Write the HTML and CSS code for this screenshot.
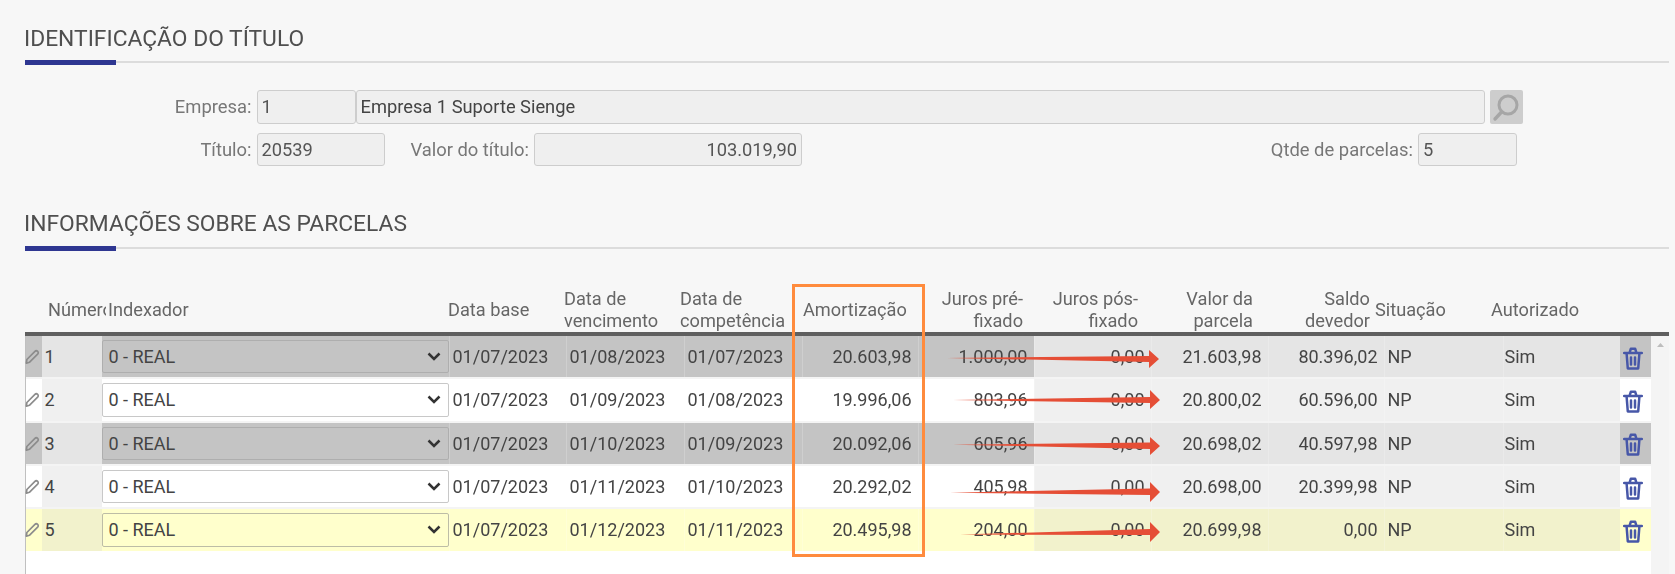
FILE: index.html
```html
<!DOCTYPE html>
<html lang="pt-BR">
<head>
<meta charset="utf-8">
<title>Parcelas</title>
<link rel="stylesheet" href="styles.css">
</head>
<body>
<svg width="0" height="0" class="defs">
  <symbol id="pencil" viewBox="0 0 16 16"><path d="M2 11.2 10.6 2.6a2 2 0 0 1 2.9 2.9L4.9 14.1 1.4 15Z" fill="none" stroke="currentColor" stroke-width="1.8" stroke-linejoin="round"/></symbol>
  <symbol id="trash" viewBox="0 0 20 23"><path d="M1.2 6h17.6M6.6 5.6 7.8 1.8h4.4l1.2 3.8M3.6 6.5 4.8 21.5h10.4l1.2-15M8 10.5v7M12 10.5v7" fill="none" stroke="currentColor" stroke-width="2.5" stroke-linejoin="round" stroke-linecap="round"/></symbol>
  <symbol id="chev" viewBox="0 0 14 9"><path d="M1.5 1.5 7 7l5.5-5.5" fill="none" stroke="currentColor" stroke-width="2.5"/></symbol>
</svg>
<main class="page">
  <header class="section-head first"><h2>IDENTIFICAÇÃO DO TÍTULO</h2></header>
  <section class="form">
    <div class="form-row">
      <span class="lbl lbl-main">Empresa:</span>
      <div class="field w-code">1</div>
      <div class="field grow dark">Empresa 1 Suporte Sienge</div>
      <div class="search"><svg viewBox="0 0 33 34" width="33" height="34"><circle cx="18" cy="15" r="9" fill="none" stroke="#a6a6a6" stroke-width="3"/><path d="M11.5 22 5 29" stroke="#a6a6a6" stroke-width="3.4" stroke-linecap="round"/></svg></div>
    </div>
    <div class="form-row">
      <span class="lbl lbl-main">Título:</span>
      <div class="field w-titulo">20539</div>
      <span class="lbl lbl-valor">Valor do título:</span>
      <div class="field w-valor right">103.019,90</div>
      <span class="lbl grow">Qtde de parcelas:</span>
      <div class="field w-qtde">5</div>
    </div>
  </section>
  <header class="section-head second"><h2>INFORMAÇÕES SOBRE AS PARCELAS</h2></header>

  <div class="thead">
    <div class="th th-num"><span class="clip">Número</span></div>
    <div class="th th-idx">Indexador</div>
    <div class="th th-d">Data base</div>
    <div class="th th-d">Data de<br>vencimento</div>
    <div class="th th-d3">Data de<br>competência</div>
    <div class="th th-am">Amortização</div>
    <div class="th th-r w116">Juros pré-<br>fixado</div>
    <div class="th th-r w115">Juros pós-<br>fixado</div>
    <div class="th th-r w115">Valor da<br>parcela</div>
    <div class="th th-r w117">Saldo<br>devedor</div>
    <div class="th th-sit">Situação</div>
    <div class="th th-aut">Autorizado</div>
  </div>

  <div class="tbody">
    <div class="rows">
      <div class="row alt">
        <div class="c pen"><svg class="i-pen"><use href="#pencil"/></svg></div><div class="c ro num">1</div>
        <div class="c idx"><div class="sel"><span>0 - REAL</span><svg class="i-chev"><use href="#chev"/></svg></div></div>
        <div class="c">01/07/2023</div><div class="c">01/08/2023</div><div class="c">01/07/2023</div>
        <div class="c r">20.603,98</div><div class="c r">1.000,00</div><div class="c r ro">0,00</div><div class="c r ro">21.603,98</div><div class="c r ro">80.396,02</div>
        <div class="c ro sit">NP</div><div class="c ro aut">Sim</div><div class="c del"><svg class="i-trash"><use href="#trash"/></svg></div>
      </div>
      <div class="row">
        <div class="c pen"><svg class="i-pen"><use href="#pencil"/></svg></div><div class="c ro num">2</div>
        <div class="c idx"><div class="sel"><span>0 - REAL</span><svg class="i-chev"><use href="#chev"/></svg></div></div>
        <div class="c">01/07/2023</div><div class="c">01/09/2023</div><div class="c">01/08/2023</div>
        <div class="c r">19.996,06</div><div class="c r">803,96</div><div class="c r ro">0,00</div><div class="c r ro">20.800,02</div><div class="c r ro">60.596,00</div>
        <div class="c ro sit">NP</div><div class="c ro aut">Sim</div><div class="c del"><svg class="i-trash"><use href="#trash"/></svg></div>
      </div>
      <div class="row alt">
        <div class="c pen"><svg class="i-pen"><use href="#pencil"/></svg></div><div class="c ro num">3</div>
        <div class="c idx"><div class="sel"><span>0 - REAL</span><svg class="i-chev"><use href="#chev"/></svg></div></div>
        <div class="c">01/07/2023</div><div class="c">01/10/2023</div><div class="c">01/09/2023</div>
        <div class="c r">20.092,06</div><div class="c r">605,96</div><div class="c r ro">0,00</div><div class="c r ro">20.698,02</div><div class="c r ro">40.597,98</div>
        <div class="c ro sit">NP</div><div class="c ro aut">Sim</div><div class="c del"><svg class="i-trash"><use href="#trash"/></svg></div>
      </div>
      <div class="row">
        <div class="c pen"><svg class="i-pen"><use href="#pencil"/></svg></div><div class="c ro num">4</div>
        <div class="c idx"><div class="sel"><span>0 - REAL</span><svg class="i-chev"><use href="#chev"/></svg></div></div>
        <div class="c">01/07/2023</div><div class="c">01/11/2023</div><div class="c">01/10/2023</div>
        <div class="c r">20.292,02</div><div class="c r">405,98</div><div class="c r ro">0,00</div><div class="c r ro">20.698,00</div><div class="c r ro">20.399,98</div>
        <div class="c ro sit">NP</div><div class="c ro aut">Sim</div><div class="c del"><svg class="i-trash"><use href="#trash"/></svg></div>
      </div>
      <div class="row cur">
        <div class="c pen"><svg class="i-pen"><use href="#pencil"/></svg></div><div class="c ro num">5</div>
        <div class="c idx"><div class="sel"><span>0 - REAL</span><svg class="i-chev"><use href="#chev"/></svg></div></div>
        <div class="c">01/07/2023</div><div class="c">01/12/2023</div><div class="c">01/11/2023</div>
        <div class="c r">20.495,98</div><div class="c r">204,00</div><div class="c r ro">0,00</div><div class="c r ro">20.699,98</div><div class="c r ro">0,00</div>
        <div class="c ro sit">NP</div><div class="c ro aut">Sim</div><div class="c del"><svg class="i-trash"><use href="#trash"/></svg></div>
      </div>
    </div>
    <div class="scrollbar"><svg width="9" height="6" viewBox="0 0 9 6"><path d="M4.5 1 8 5H1Z" fill="#bdbdbd"/></svg></div>
  </div>

  <div class="highlight"></div>
  <svg class="arrows" viewBox="0 0 1675 574" width="1675" height="574">
    <polygon points="947,358 1149,356 1149,350 1159,359 1149,368 1149,362"/>
    <polygon points="953,400 1150,397 1150,390 1160,400 1150,409 1150,403"/>
    <polygon points="953,444.7 1150,442.5 1150,437 1160,446 1150,455 1150,449"/>
    <polygon points="950,492.7 1150,488.5 1150,482 1160,492 1150,502 1150,495"/>
    <polygon points="960,534.5 1150,529 1150,522 1160,532 1150,542 1150,535"/>
  </svg>
</main>
</body>
</html>
```
FILE: styles.css
```css
* { box-sizing: border-box; }
html, body { margin: 0; height: 574px; overflow: hidden; background: #f7f7f7; }
body { font-family: Roboto, "Liberation Sans", sans-serif; font-size: 18px; color: #444; }
.defs { position: absolute; }
.page { position: relative; width: 1675px; height: 574px; padding: 0 6px 0 25px; filter: blur(0.55px); }

.section-head { position: relative; display: flex; align-items: flex-end; border-bottom: 2px solid #dcdcdc; }
.section-head.first { height: 63px; padding-bottom: 10px; }
.section-head.second { height: 83px; padding-bottom: 11px; }
.section-head::after { content: ""; position: absolute; left: 0; bottom: -4px; width: 91px; height: 5px; background: #2e3691; }
.section-head h2 { margin: 0; font-size: 22.8px; line-height: 24px; font-weight: 400; color: #4f4f4f; margin-left: -1px; }

.form { display: flex; flex-direction: column; gap: 9px; padding-top: 27px; }
.form-row { display: flex; align-items: center; height: 33.5px; }
.lbl { color: #777; text-align: right; flex: none; font-size: 18.4px; margin-right: 5px; }
.lbl.grow { flex: 1; }
.lbl-main { width: 226.5px; }
.lbl-valor { width: 144px; }
.field { flex: none; height: 33.5px; line-height: 31px; padding: 0 4px; background: #efefef; border: 1.5px solid #cdcdcd; border-radius: 3px; color: #555; font-size: 18.3px; }
.field.grow { flex: none; width: 1129px; margin-left: 0; padding-left: 4px; }
.field.dark { color: #444; }
.field.right { text-align: right; }
.w-code { width: 99px; }
.w-titulo { width: 128.5px; }
.w-valor { width: 268px; }
.w-qtde { width: 99px; margin-right: 152px; }
.search { flex: none; width: 33px; height: 34px; margin-left: 5px; background: #cdcdcd; border-radius: 2px; }
.search svg { display: block; }

.thead { display: flex; height: 87px; padding: 35px 0 0 23px; color: #666; font-size: 18.2px; line-height: 22px; }
.th { flex: none; height: 48px; padding-top: 4px; }
.th-num { width: 60px; line-height: 44px; }
.clip { display: block; width: 58px; overflow: hidden; white-space: nowrap; }
.th-idx { width: 340px; line-height: 44px; }
.th-d { width: 116px; }
.th-d3 { width: 123px; }
.th-am { width: 104px; line-height: 44px; }
.th-r { text-align: right; }
.w116 { width: 116px; }
.w115 { width: 115px; }
.w117 { width: 117px; }
.th-sit { width: 121px; padding-left: 5px; line-height: 44px; }
.th-aut { width: 120px; line-height: 44px; }
.thead .th-d:nth-child(3) { line-height: 44px; }

.tbody { display: flex; height: 242px; margin-top: -4px; border-top: 4px solid #777; border-image: linear-gradient(#5f5f5f, #aaa) 1; background: #fff; }
.rows { flex: none; width: 1626px; border-left: 1.5px solid #c0c0c0; }
.row { display: grid; grid-template-columns: 15.5px 60px 347px 117px 118px 118px 116px 116px 117px 117px 116px 119px 117px 32px; height: 43.33px; border-bottom: 2px solid #f4f4f4; background: #fff; }
.scrollbar { flex: none; width: 18px; background: #f4f4f4; display: flex; justify-content: center; align-items: flex-start; padding-top: 6px; }
.c { display: flex; align-items: center; padding-left: 3px; white-space: nowrap; border-left: 1px solid rgba(255,255,255,.2); }
.c.r { justify-content: flex-end; padding: 0 6px 0 0; }
.c.ro { background: #f0f0f0; }
.pen { padding-left: 0; border-left: 0; color: #8c8c8c; }
.i-pen { width: 15px; height: 15px; flex: none; margin: 0 0 0 -1px; }
.num { padding-left: 3px; border-left: 0; }
.idx { padding: 0; border-left: 0; }
.sit { padding-left: 3px; }
.aut { padding-left: 1px; }
.del { padding: 0 5px 0 0; justify-content: center; color: #4757a8; border-left: 0; }
.i-trash { width: 20px; height: 23px; flex: none; margin-top: 3px; }
.sel { flex: 1; height: 33.5px; display: flex; align-items: center; justify-content: space-between; padding: 0 7px 0 6px; background: inherit; border: 1.5px solid #c8c8c8; border-radius: 2px; }
.i-chev { width: 14px; height: 9px; color: #333; flex: none; }

.row.alt { background: #c4c4c4; }
.row.alt .c.ro { background: #e5e5e5; }
.row.alt .sel { background: #c4c4c4; border-color: #aeaeae; }
.row.cur { background: #ffffcc; border-bottom-color: #fff; }
.row.cur .c.ro { background: #f2f2cc; }
.row.cur .sel { background: #ffffcc; border-color: #bdbda6; }
.row:not(.alt):not(.cur) .sel { background: #fff; }

.highlight { position: absolute; left: 792px; top: 284px; width: 133px; height: 273px; border: 3px solid #ff8b3d; }
.arrows { position: absolute; left: 0; top: 0; pointer-events: none; }
.arrows polygon { fill: #e54e36; }
```
